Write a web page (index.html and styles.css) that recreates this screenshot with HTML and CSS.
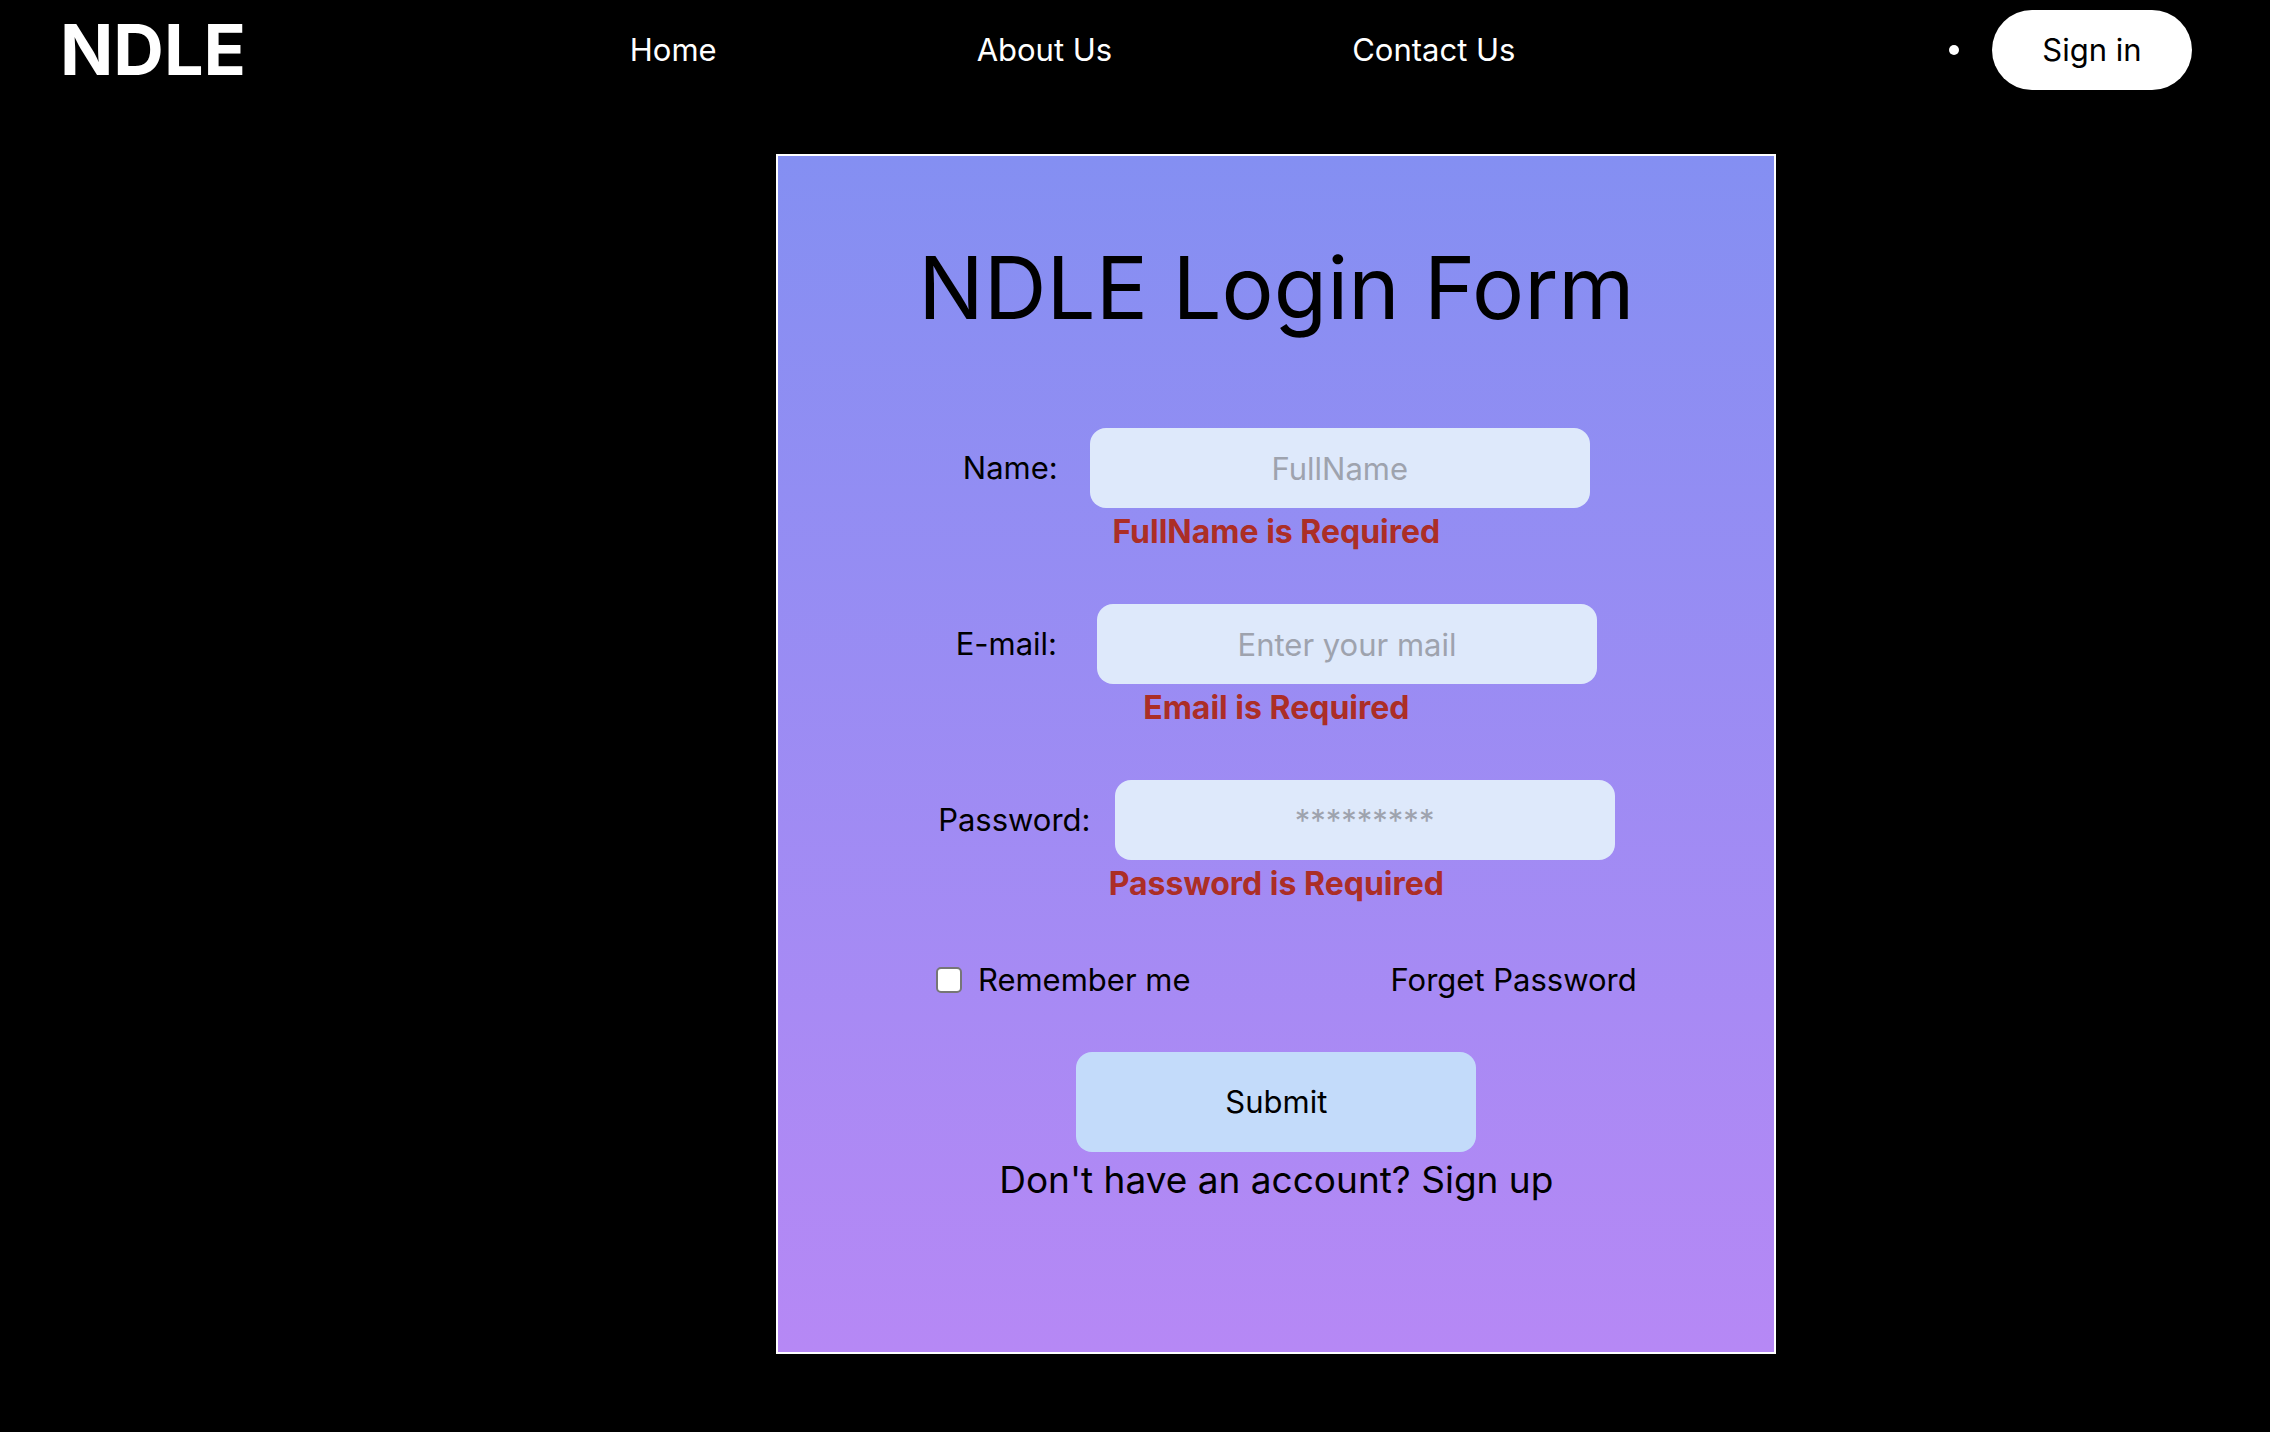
FILE: index.html
```html
<!DOCTYPE html>
<html lang="en">
<head>
  <meta charset="utf-8">
  <meta name="viewport" content="width=device-width, initial-scale=1">
  <title>NDLE Login</title>
  <link rel="stylesheet" href="styles.css">
</head>
<body>
  <header class="header">
    <a class="logo" href="#">NDLE</a>
    <nav class="nav">
      <a class="nav-link nav-link-home" href="#">Home</a>
      <a class="nav-link" href="#">About Us</a>
      <a class="nav-link" href="#">Contact Us</a>
    </nav>
    <div class="actions">
      <span class="dot"></span>
      <button class="sign-in" type="button">Sign in</button>
    </div>
  </header>

  <main class="main">
    <form class="card">
      <h1 class="title">NDLE Login Form</h1>

      <div class="field field-name">
        <label for="name">Name:</label>
        <input class="input" id="name" type="text" placeholder="FullName">
      </div>
      <p class="error">FullName is Required</p>

      <div class="field field-email">
        <label for="email">E-mail:</label>
        <input class="input" id="email" type="email" placeholder="Enter your mail">
      </div>
      <p class="error">Email is Required</p>

      <div class="field field-password">
        <label for="password">Password:</label>
        <input class="input" id="password" type="password" placeholder="*********">
      </div>
      <p class="error">Password is Required</p>

      <div class="options">
        <div class="remember">
          <input class="checkbox" id="remember" type="checkbox">
          <label for="remember">Remember me</label>
        </div>
        <a href="#">Forget Password</a>
      </div>

      <button class="submit" type="submit">Submit</button>
      <p class="signup">Don't have an account? <a href="#">Sign up</a></p>
    </form>
  </main>
</body>
</html>
```

FILE: styles.css
```css
* {
  box-sizing: border-box;
}

body {
  margin: 0;
  min-height: 100vh;
  background: #000;
  color: #000;
  font-family: Inter, "Liberation Sans", sans-serif;
  font-size: 31px;
  line-height: 48px;
}

h1,
p {
  margin: 0;
  font-weight: 400;
}

a {
  color: inherit;
  text-decoration: none;
}

button,
input {
  border: 0;
  color: inherit;
  font: inherit;
}

.header {
  display: flex;
  align-items: center;
  padding: 10px 78px 10px 60px;
  color: #fff;
}

.logo {
  font-size: 70px;
  font-weight: 700;
  line-height: 80px;
}

.nav {
  display: flex;
  gap: 240px;
  margin-left: 18%;
}

.nav-link-home {
  margin-right: 20px;
}

.actions {
  display: flex;
  align-items: center;
  gap: 33px;
  margin-left: auto;
}

.dot {
  width: 10px;
  height: 10px;
  border-radius: 50%;
  background: #fff;
}

.sign-in {
  width: 200px;
  height: 80px;
  padding: 0;
  border-radius: 40px;
  background: #fff;
  color: #000;
}

.main {
  padding: 54px 0 78px 34.2%;
}

.card {
  display: flex;
  flex-direction: column;
  align-items: center;
  width: 100%;
  max-width: 1000px;
  padding: 78px 0 144px;
  border: 2px solid #fff;
  background: linear-gradient(#848ff2, #b688f5);
}

.title {
  margin-bottom: 86px;
  font-size: 87px;
  line-height: 108px;
}

.field {
  display: flex;
  align-items: center;
}

.field-name {
  gap: 32px;
}

.field-email {
  gap: 40px;
}

.field-password {
  gap: 24px;
}

.input {
  width: 500px;
  height: 80px;
  padding: 0 16px;
  border-radius: 16px;
  background: #dee9fb;
  text-align: center;
}

.input::placeholder {
  color: #9ea3ae;
  opacity: 1;
}

.error {
  margin-bottom: 48px;
  color: #ac2e26;
  font-size: 32px;
  font-weight: 700;
}

.options {
  display: flex;
  gap: 200px;
  margin-bottom: 48px;
  padding-left: 20px;
}

.remember {
  display: flex;
  align-items: center;
  gap: 16px;
}

.checkbox {
  appearance: none;
  width: 26px;
  height: 26px;
  margin: 0;
  border: 2px solid #767676;
  border-radius: 5px;
  background: #fff;
}

.checkbox:checked {
  background: #767676;
}

.submit {
  width: 400px;
  height: 100px;
  border-radius: 16px;
  background: #c3dbfa;
}

.signup {
  font-size: 37px;
  line-height: 56px;
}
```
